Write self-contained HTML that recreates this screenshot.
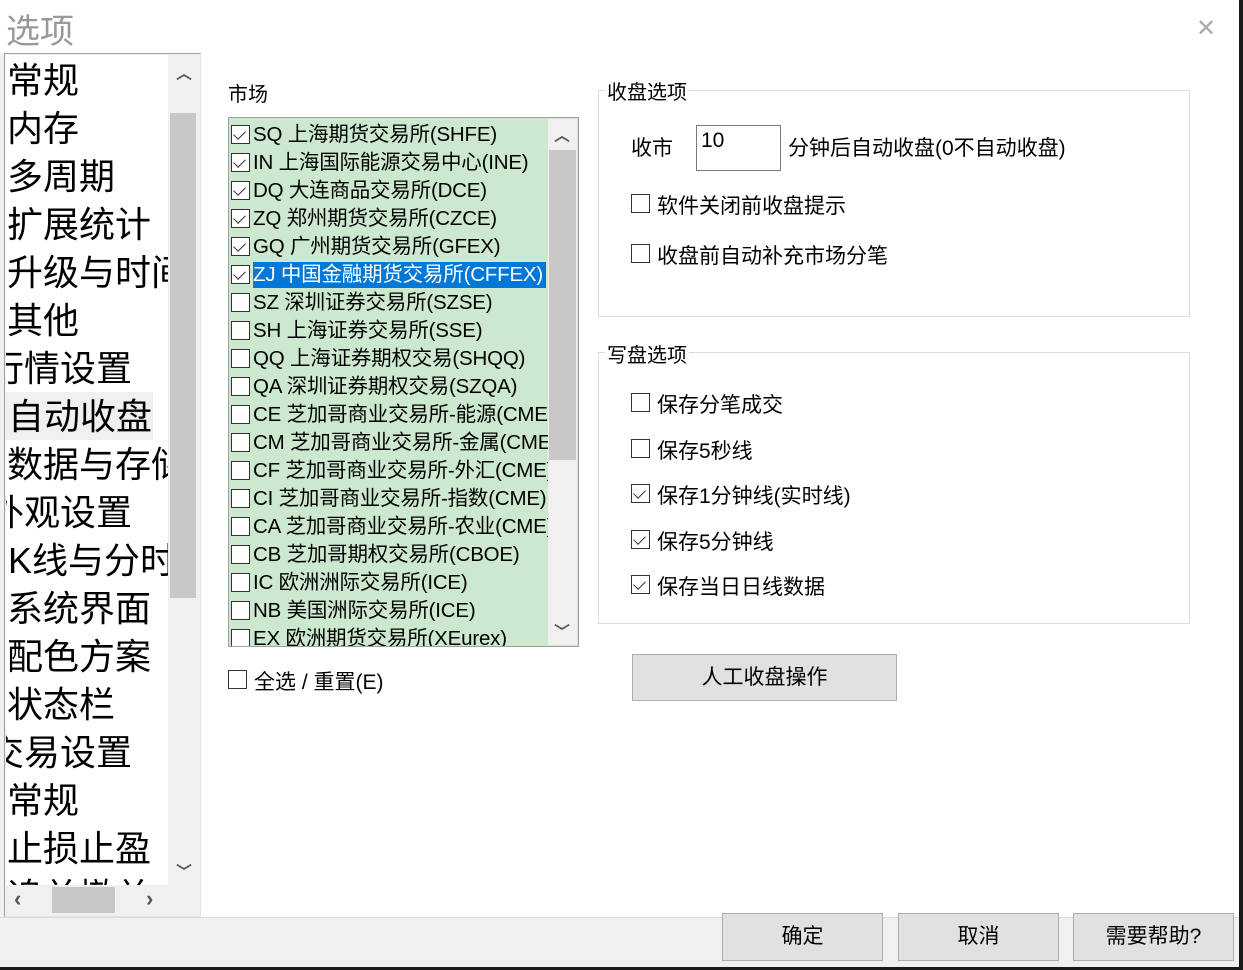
<!DOCTYPE html>
<html><head><meta charset="utf-8"><style>
*{margin:0;padding:0;box-sizing:border-box}
body{width:1243px;height:970px;background:#1a1a1a;position:relative;overflow:hidden;font-family:"Liberation Sans","Microsoft YaHei","Noto Sans CJK SC",sans-serif;color:#000}
.abs{position:absolute}
#dlg{left:0;top:0;width:1239px;height:967px;background:#fff;overflow:hidden}
.t{position:absolute;white-space:nowrap}
.cb{position:absolute;width:19px;height:19px;border:1px solid #333;background:#fff}
.cb.c::after{content:"";position:absolute;left:4px;top:2px;width:6px;height:10px;border:solid #333;border-width:0 1.5px 1.5px 0;transform:rotate(45deg)}
.btn{position:absolute;background:#e1e1e1;border:1px solid #adadad;text-align:center;font-size:21px}
.grp{position:absolute;border:1px solid #dcdcdc}
.gt{position:absolute;background:#fff;font-size:20px;padding:0 2px}
.r{font-size:21px}
</style></head><body>
<div id="dlg" class="abs">
<div class="t" style="left:6px;top:4px;font-size:34px;color:#999">选项</div>
<div class="t" style="left:1196px;top:14px;font-size:24px;color:#aaa;font-weight:100">✕</div>

<!-- left panel -->
<div class="abs" style="left:0;top:53px;width:201px;height:864px;background:#f0f0f0"></div>
<div class="abs" style="left:4px;top:53px;width:197px;height:864px;border:1px solid #a0a0a0;border-right-color:#e3e3e3;border-bottom-color:#e3e3e3;background:#f0f0f0"></div>
<div class="abs" style="left:6px;top:55px;width:162px;height:830px;background:#fff;overflow:hidden;font-size:36px;line-height:48px">
  <div class="abs" style="left:0;top:337px;width:147px;height:48px;background:#f0f0f0"></div>
  <div class="t" style="left:1px;top:2px">常规</div>
  <div class="t" style="left:1px;top:50px">内存</div>
  <div class="t" style="left:1px;top:98px">多周期</div>
  <div class="t" style="left:1px;top:146px">扩展统计</div>
  <div class="t" style="left:1px;top:194px">升级与时间</div>
  <div class="t" style="left:1px;top:242px">其他</div>
  <div class="t" style="left:-18px;top:290px">行情设置</div>
  <div class="t" style="left:2px;top:338px">自动收盘</div>
  <div class="t" style="left:1px;top:386px">数据与存储</div>
  <div class="t" style="left:-18px;top:434px">外观设置</div>
  <div class="t" style="left:2px;top:482px">K线与分时</div>
  <div class="t" style="left:1px;top:530px">系统界面</div>
  <div class="t" style="left:1px;top:578px">配色方案</div>
  <div class="t" style="left:1px;top:626px">状态栏</div>
  <div class="t" style="left:-18px;top:674px">交易设置</div>
  <div class="t" style="left:1px;top:722px">常规</div>
  <div class="t" style="left:1px;top:770px">止损止盈</div>
  <div class="t" style="left:1px;top:818px">追单撤单</div>
</div>
<div class="abs" style="left:168px;top:55px;width:30px;height:830px;background:#f0f0f0"></div>
<div class="abs" style="left:170px;top:113px;width:26px;height:485px;background:#c8c8c8"></div>
<div class="t" style="left:176px;top:60px;font-size:16px;color:#555;font-weight:bold">︿</div>
<div class="t" style="left:176px;top:858px;font-size:16px;color:#555;font-weight:bold">﹀</div>
<div class="abs" style="left:6px;top:885px;width:162px;height:29px;background:#f0f0f0"></div>
<div class="abs" style="left:52px;top:887px;width:63px;height:26px;background:#c8c8c8"></div>
<div class="t" style="left:14px;top:886px;font-size:22px;color:#555;font-weight:bold">‹</div>
<div class="t" style="left:146px;top:886px;font-size:22px;color:#555;font-weight:bold">›</div>

<!-- market -->
<div class="t" style="left:228px;top:78px;font-size:20px">市场</div>
<div class="abs" style="left:228px;top:117px;width:351px;height:530px;border:1px solid #a0a0a0;background:#cce8cf;overflow:hidden;font-size:20.5px;line-height:28px;letter-spacing:-0.2px">
<div id="mk"></div>
</div>
<div class="abs" style="left:548px;top:119px;width:29px;height:526px;background:#f0f0f0"></div>
<div class="abs" style="left:549px;top:150px;width:27px;height:310px;background:#c8c8c8"></div>
<div class="t" style="left:554px;top:122px;font-size:16px;color:#555;font-weight:bold">︿</div>
<div class="t" style="left:554px;top:618px;font-size:16px;color:#555;font-weight:bold">﹀</div>
<div class="cb" style="left:228px;top:670px"></div>
<div class="t r" style="left:254px;top:666px">全选 / 重置(E)</div>

<!-- 收盘选项 -->
<div class="grp" style="left:598px;top:90px;width:592px;height:227px"></div>
<div class="gt" style="left:605px;top:76px">收盘选项</div>
<div class="t r" style="left:631px;top:132px">收市</div>
<div class="abs" style="left:696px;top:125px;width:85px;height:46px;border:1px solid #7a7a7a"></div>
<div class="t" style="left:701px;top:129px;font-size:21px">10</div>
<div class="t r" style="left:788px;top:132px">分钟后自动收盘(0不自动收盘)</div>
<div class="cb" style="left:631px;top:194px"></div>
<div class="t r" style="left:657px;top:190px">软件关闭前收盘提示</div>
<div class="cb" style="left:631px;top:244px"></div>
<div class="t r" style="left:657px;top:240px">收盘前自动补充市场分笔</div>

<!-- 写盘选项 -->
<div class="grp" style="left:598px;top:352px;width:592px;height:272px"></div>
<div class="gt" style="left:605px;top:339px">写盘选项</div>
<div class="cb" style="left:631px;top:393px"></div><div class="t r" style="left:657px;top:389px">保存分笔成交</div>
<div class="cb" style="left:631px;top:439px"></div><div class="t r" style="left:657px;top:435px">保存5秒线</div>
<div class="cb c" style="left:631px;top:484px"></div><div class="t r" style="left:657px;top:480px">保存1分钟线(实时线)</div>
<div class="cb c" style="left:631px;top:530px"></div><div class="t r" style="left:657px;top:526px">保存5分钟线</div>
<div class="cb c" style="left:631px;top:575px"></div><div class="t r" style="left:657px;top:571px">保存当日日线数据</div>

<div class="btn" style="left:632px;top:654px;width:265px;height:47px;line-height:45px">人工收盘操作</div>

<!-- bottom -->
<div class="abs" style="left:0;top:917px;width:1239px;height:50px;background:#f0f0f0;border-top:1px solid #dcdcdc"></div>
<div class="btn" style="left:722px;top:913px;width:161px;height:48px;line-height:46px">确定</div>
<div class="btn" style="left:898px;top:913px;width:161px;height:48px;line-height:46px">取消</div>
<div class="btn" style="left:1073px;top:913px;width:161px;height:48px;line-height:46px">需要帮助?</div>
</div>
<script>
var items=[["SQ 上海期货交易所(SHFE)",1],["IN 上海国际能源交易中心(INE)",1],["DQ 大连商品交易所(DCE)",1],["ZQ 郑州期货交易所(CZCE)",1],["GQ 广州期货交易所(GFEX)",1],["ZJ 中国金融期货交易所(CFFEX)",2],["SZ 深圳证券交易所(SZSE)",0],["SH 上海证券交易所(SSE)",0],["QQ 上海证券期权交易(SHQQ)",0],["QA 深圳证券期权交易(SZQA)",0],["CE 芝加哥商业交易所-能源(CME)",0],["CM 芝加哥商业交易所-金属(CME)",0],["CF 芝加哥商业交易所-外汇(CME)",0],["CI 芝加哥商业交易所-指数(CME)",0],["CA 芝加哥商业交易所-农业(CME)",0],["CB 芝加哥期权交易所(CBOE)",0],["IC 欧洲洲际交易所(ICE)",0],["NB 美国洲际交易所(ICE)",0],["EX 欧洲期货交易所(XEurex)",0]];
var h="";items.forEach(function(it,i){var y=3+i*28;
h+='<div class="cb'+(it[1]?' c':'')+'" style="left:2px;top:'+(y+4)+'px"></div>';
if(it[1]==2)h+='<div class="abs" style="left:24px;top:'+(y+1)+'px;width:293px;height:26px;background:#0078d7"></div>';
h+='<div class="t" style="left:24px;top:'+(y)+'px;'+(it[1]==2?'color:#fff':'')+'">'+it[0]+'</div>';});
document.getElementById('mk').innerHTML=h;
</script>
</body></html>
